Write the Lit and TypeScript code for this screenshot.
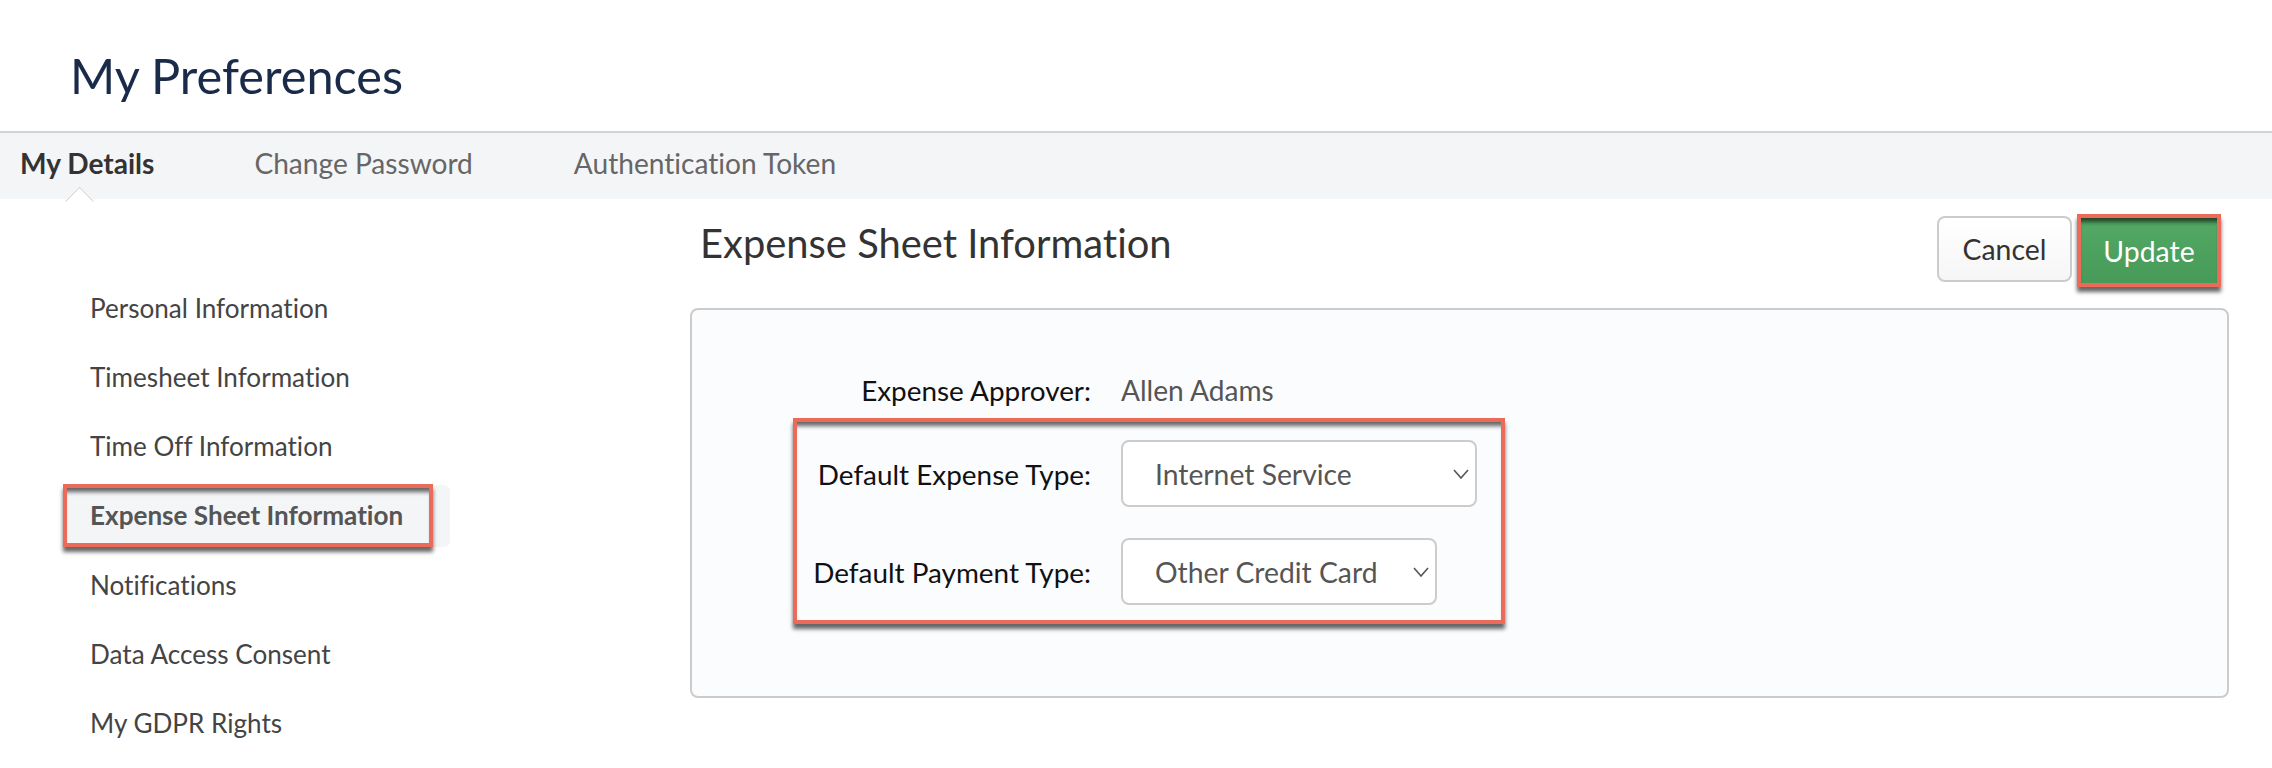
import { LitElement, css, html, svg } from 'lit'
import { customElement } from 'lit/decorators.js'

const chevron = svg`<path d="M1 1 L8 9 L15 1" fill="none" stroke="#555" stroke-width="1.6" />`

@customElement('app-root')
export class AppRoot extends LitElement {
    private navItems = [
        'Personal Information',
        'Timesheet Information',
        'Time Off Information',
        'Expense Sheet Information',
        'Notifications',
        'Data Access Consent',
        'My GDPR Rights',
    ]

    render() {
        return html`
            <h1 class="title">My Preferences</h1>
            <div class="tabs">
                <a class="tab active">My Details</a>
                <a class="tab second">Change Password</a>
                <a class="tab third">Authentication Token</a>
            </div>
            <div class="body">
                <nav class="side">
                    ${this.navItems.map(item => item === 'Expense Sheet Information'
                        ? html`<div class="row current"><span class="current-label marked">${item}</span></div>`
                        : html`<div class="row"><span class="row-label">${item}</span></div>`)}
                </nav>
                <main class="main">
                    <div class="head">
                        <h2 class="heading">Expense Sheet Information</h2>
                        <div class="actions">
                            <button class="btn cancel">Cancel</button>
                            <button class="btn update marked">Update</button>
                        </div>
                    </div>
                    <section class="card">
                        <div class="field approver">
                            <span class="label">Expense Approver:</span>
                            <span class="value">Allen Adams</span>
                        </div>
                        <div class="group marked">
                            <div class="field">
                                <label class="label">Default Expense Type:</label>
                                <div class="select-wrap wide">
                                    <select><option>Internet Service</option></select>
                                    <svg class="chev" viewBox="0 0 16 10">${chevron}</svg>
                                </div>
                            </div>
                            <div class="field">
                                <label class="label">Default Payment Type:</label>
                                <div class="select-wrap narrow">
                                    <select><option>Other Credit Card</option></select>
                                    <svg class="chev" viewBox="0 0 16 10">${chevron}</svg>
                                </div>
                            </div>
                        </div>
                    </section>
                </main>
            </div>
        `
    }

    static styles = css`
        :host {
            display: block;
            width: 2272px;
            height: 768px;
            overflow: hidden;
            background: #fff;
            font-family: Lato, sans-serif;
            font-variant-ligatures: none;
        }

        .title {
            margin: 0;
            height: 131px;
            box-sizing: border-box;
            padding: 45px 0 0 70px;
            font-size: 48.7px;
            line-height: 60px;
            font-weight: 400;
            color: #1a2b4a;
        }

        .tabs {
            display: flex;
            height: 68px;
            box-sizing: border-box;
            border-top: 2px solid #d2d2d2;
            background: #f4f5f7;
            font-size: 28.1px;
            line-height: 60px;
            position: relative;
        }

        .tab {
            color: #666;
        }

        .tab.active {
            margin-left: 20px;
            font-weight: 700;
            color: #333;
        }

        .tab.active::after {
            content: '';
            position: absolute;
            left: 69px;
            top: 58px;
            width: 21px;
            height: 21px;
            box-sizing: border-box;
            transform: rotate(45deg);
            background: #fff;
            border-left: 1px solid #ccc;
            border-top: 1px solid #ccc;
            clip-path: polygon(0 0, 100% 0, 0 100%);
        }

        .tab.second {
            margin-left: 100px;
        }

        .tab.third {
            margin-left: 101px;
        }

        .body {
            display: flex;
        }

        .side {
            width: 690px;
            box-sizing: border-box;
            padding: 78px 0 0 63px;
            display: flex;
            flex-direction: column;
            gap: 7.2px;
            font-size: 26.1px;
            color: #444;
        }

        .row {
            height: 62px;
            width: 387px;
            display: flex;
            align-items: center;
            box-sizing: border-box;
        }

        .row-label {
            padding-left: 27px;
        }

        .row.current {
            background: #f4f5f7;
            border-radius: 6px;
        }

        .marked {
            border: 4px solid #ec6a5a;
            box-shadow: 0 5px 4px rgba(0, 0, 0, 0.6), inset 0 7px 4px -3px rgba(0, 0, 0, 0.6);
        }

        .current-label {
            box-sizing: border-box;
            width: 370px;
            height: 63px;
            padding-left: 23px;
            line-height: 55px;
            font-weight: 700;
            color: #555;
        }

        .main {
            width: 1539px;
        }

        .head {
            display: flex;
            justify-content: space-between;
            height: 109px;
            padding-right: 8px;
        }

        .heading {
            margin: 0;
            padding: 19px 0 0 10px;
            font-size: 39.9px;
            line-height: 50px;
            font-weight: 400;
            color: #333;
        }

        .actions {
            display: flex;
            gap: 5px;
            padding-top: 15px;
            align-items: flex-start;
        }

        .btn {
            font-family: inherit;
            font-variant-ligatures: none;
            font-size: 28.4px;
            box-sizing: border-box;
        }

        .cancel {
            width: 135px;
            height: 66px;
            margin-top: 2px;
            color: #333;
            border: 2px solid #ccc;
            border-radius: 8px;
            background: linear-gradient(#fff, #f6f6f6);
        }

        .update {
            width: 144px;
            height: 73px;
            color: #fff;
            background: linear-gradient(#54a965, #479a58);
        }

        .card {
            box-sizing: border-box;
            height: 390px;
            padding: 60px 0 0 101px;
            border: 2px solid #ccc;
            border-radius: 8px;
            background: #fbfcfe;
        }

        .field {
            display: flex;
            align-items: center;
            gap: 30px;
        }

        .approver {
            height: 40px;
            margin-bottom: 8px;
            padding-left: 4px;
        }

        .label {
            width: 294px;
            text-align: right;
            font-size: 27.9px;
            color: #111;
        }

        .value {
            font-size: 28.1px;
            color: #555;
        }

        .group {
            box-sizing: border-box;
            width: 712px;
            height: 206px;
            padding-top: 18px;
            display: flex;
            flex-direction: column;
            gap: 31px;
        }

        .select-wrap {
            position: relative;
            height: 67px;
        }

        .select-wrap.wide {
            width: 356px;
        }

        .select-wrap.narrow {
            width: 316px;
        }

        select {
            appearance: none;
            width: 100%;
            height: 100%;
            box-sizing: border-box;
            padding: 0 0 0 32px;
            border: 2px solid #ccc;
            border-radius: 8px;
            background: #fff;
            font-family: inherit;
            font-variant-ligatures: none;
            font-size: 28.3px;
            color: #555;
        }

        .chev {
            position: absolute;
            right: 8px;
            top: 29px;
            width: 16px;
            height: 10px;
        }
    `
}

declare global {
    interface HTMLElementTagNameMap {
        'app-root': AppRoot
    }
}
